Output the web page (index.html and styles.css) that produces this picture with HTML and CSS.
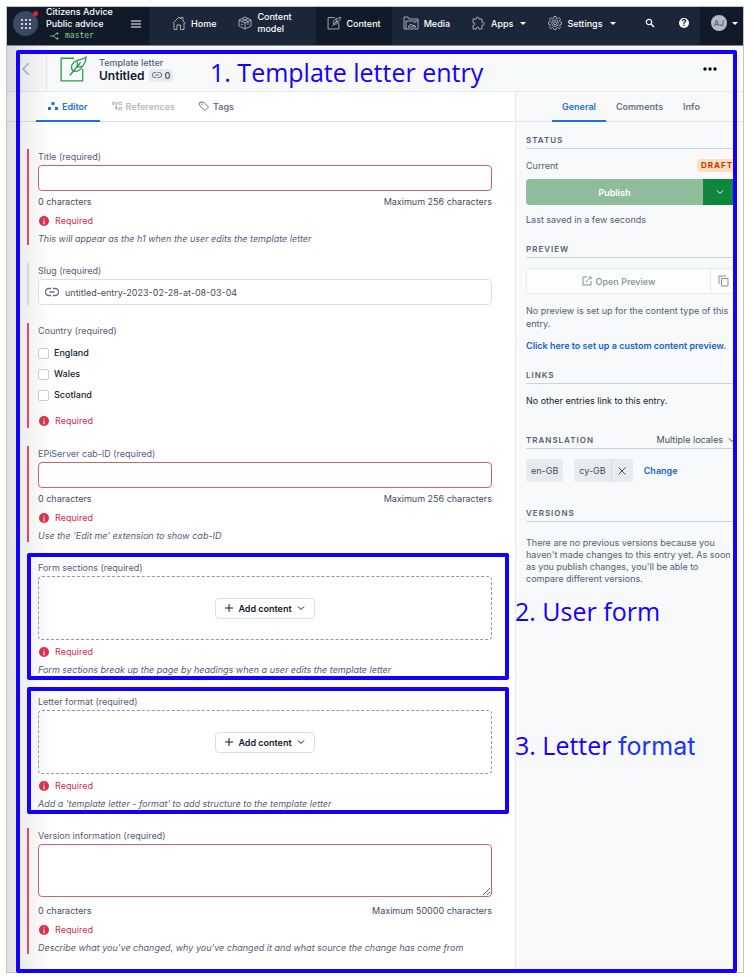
FILE: index.html
```
<!DOCTYPE html>
<html lang="en">
<head>
  <meta charset="UTF-8" />
  <meta name="viewport" content="width=device-width, initial-scale=1.0">
  <title>Template letter - Untitled</title>
  <link rel="stylesheet" href="styles.css">
</head>
<body>
  <!-- icons -->
  <svg class="sprite" aria-hidden="true">
    <symbol id="feather" viewBox="0 0 26 26">
      <path d="M14 3H2v21h20V13M10 19 20 7M13 15c-3-4-1-8 4-10 3-1 6-1 8-3 0 4-1 6-3 8-2 4-5 6-9 5zM16 11.500l5-1M17 10.500V6" />
    </symbol>
    <symbol id="link" viewBox="0 0 16 16">
      <path d="M7 4H4.500a4 4 0 0 0 0 8H7M9 4h2.500a4 4 0 0 1 0 8H9M5 8h6" />
    </symbol>
    <symbol id="chevron" viewBox="0 0 10 10">
      <path d="M2 3.500 5 6.500 8 3.500" />
    </symbol>
    <symbol id="alert" viewBox="0 0 10 10">
      <circle cx="5" cy="5" r="5" fill="#d9304c" />
      <path d="M5 2.200v1.200M4.200 4.700H5v3M4 7.700h2" stroke="#fbd8dd" fill="none" />
    </symbol>
  </svg>

  <div class="app">
    <header class="topbar">
      <div class="org">
        <button class="launcher" aria-label="Apps">
          <svg viewBox="0 0 12 12" width="12" height="12"><path d="M1 2h2M5 2h2M9 2h2M1 6h2M5 6h2M9 6h2M1 10h2M5 10h2M9 10h2" stroke="#fff" stroke-width="1.600" /></svg>
          <span class="dot"></span>
        </button>
        <div class="org-names">
          <div>Citizens Advice</div>
          <div>Public advice</div>
          <div class="branch">
            <svg viewBox="0 0 12 10" width="10" height="10"><path d="M1 5h4c2 0 2-3 4-3M5 5c2 0 2 3 4 3" fill="none" stroke="#8fd18f" /><circle cx="10" cy="2" r="1.300" fill="#8fd18f" /><circle cx="10" cy="8" r="1.300" fill="#8fd18f" /></svg>
            master
          </div>
        </div>
        <button class="burger" aria-label="Menu"><svg viewBox="0 0 10 8" width="10" height="8"><path d="M0 1h10M0 4h10M0 7h10" stroke="#fff" /></svg></button>
      </div>
      <nav class="nav">
        <a href="#">
          <svg viewBox="0 0 14 14"><path d="M1 7 7 1l2 2V1.500h2V5l2.500 2.500M2 7v6.500h3V9h3.500v4.500H12V7" /></svg>
          Home
        </a>
        <a href="#">
          <svg viewBox="0 0 14 14"><path d="M7 1 1 4v6l6 3 6-3V4zM1 4l6 3 6-3M7 7v6M4 2.500l6 3V9M10 2.500 4 5.500M3 8l2 1" /></svg>
          <span class="two-lines">Content model</span>
        </a>
        <a href="#" class="active">
          <svg viewBox="0 0 26 26" class="wide-stroke"><use href="#feather" /></svg>
          Content
        </a>
        <a href="#">
          <svg viewBox="0 0 16 14" class="media-icon"><path d="M1 13V1h4l1 2h9v10zM3 13V5h12M5 11l3-3 2 2 1-1 2 2zM11 6.500h1.500" /></svg>
          Media
        </a>
        <a href="#">
          <svg viewBox="0 0 14 14"><path d="M1 3h3.500c-1-2.500 3-2.500 2.500 0h3v3.500c3-1 3 3.500 0 2.500V13H7c.5-2.500-3.500-2.500-2.500 0H1V9.500c2.500.5 2.500-3.500 0-2.500z" /></svg>
          Apps
          <span class="caret"></span>
        </a>
        <a href="#">
          <svg viewBox="0 0 14 14"><path d="M6 .5h2l.4 1.800 1.200.5 1.600-1 1.300 1.300-1 1.600.5 1.200 1.500.3v2l-1.500.4-.5 1.200 1 1.500-1.300 1.300-1.600-1-1.200.5L8 13.500H6l-.4-1.400-1.200-.5-1.600 1-1.300-1.300 1-1.500L2 8.600.5 8.200v-2L2 5.900l.5-1.200-1-1.600 1.300-1.300 1.600 1 1.200-.5z" /><circle cx="7" cy="7.200" r="3.300" /><circle cx="7" cy="7.200" r="1.500" /></svg>
          Settings
          <span class="caret"></span>
        </a>
      </nav>
      <div class="tools">
        <button aria-label="Search"><svg viewBox="0 0 10 10" width="10" height="10"><circle cx="4" cy="4" r="2.700" fill="none" stroke="#fff" stroke-width="1.200" /><path d="m6 6 3 3" stroke="#fff" stroke-width="1.400" /></svg></button>
        <button class="help" aria-label="Help">?</button>
      </div>
      <button class="account" aria-label="Account"><span class="avatar">AJ</span><span class="caret"></span></button>
    </header>

    <div class="entry-header">
      <a href="#" class="back" aria-label="Back"><svg viewBox="0 0 8 12" width="8" height="12"><path d="M7 0 1 6l6 6" fill="none" stroke="#a3b4c0" stroke-width="1.400" /></svg></a>
      <svg class="entry-icon"><use href="#feather" /></svg>
      <div class="entry-names">
        <div class="content-type">Template letter</div>
        <div class="entry-title">
          <h1>Untitled</h1>
          <span class="link-count"><svg class="line-icon"><use href="#link" /></svg>0</span>
        </div>
      </div>
      <button class="more" aria-label="More actions"><svg viewBox="0 0 14 4" width="14" height="4"><circle cx="2" cy="2" r="1.700" /><circle cx="7" cy="2" r="1.700" /><circle cx="12" cy="2" r="1.700" /></svg></button>
    </div>

    <div class="columns">
      <main class="editor">
        <div class="tabs editor-tabs">
          <button class="tab selected"><svg viewBox="0 0 10 10"><path d="M3.500 1h3v3h-3zM0 6h3v3H0zM7 6h3v3H7z" fill="currentColor" /></svg>Editor</button>
          <button class="tab disabled"><svg viewBox="0 0 10 10"><path d="M.5 1h2v2.500h-2zM7 1h2.500v2.500H7zM7 6.500h2.500V9H7zM2.500 2H7M4.500 2v6H7M3.500 5v3" fill="none" stroke="currentColor" /></svg>References</button>
          <button class="tab tags"><svg viewBox="0 0 10 10"><path d="M.7 1.200h4L9.500 6 6 9.500.7 4.700z" fill="none" stroke="currentColor" /><circle cx="3" cy="3.200" r=".7" fill="currentColor" /></svg>Tags</button>
        </div>

        <form class="fields">
          <div class="field invalid">
            <label for="title">Title (required)</label>
            <input type="text" id="title">
            <div class="counter"><span>0 characters</span><span>Maximum 256 characters</span></div>
            <div class="error"><svg><use href="#alert" /></svg>Required</div>
            <p class="hint">This will appear as the h1 when the user edits the template letter</p>
          </div>

          <div class="field">
            <label for="slug">Slug (required)</label>
            <div class="slug-box">
              <svg class="line-icon"><use href="#link" /></svg>
              <input type="text" id="slug" value="untitled-entry-2023-02-28-at-08-03-04">
            </div>
          </div>

          <div class="field invalid">
            <div class="label">Country (required)</div>
            <div class="options">
              <label><input type="checkbox">England</label>
              <label><input type="checkbox">Wales</label>
              <label><input type="checkbox">Scotland</label>
            </div>
            <div class="error"><svg><use href="#alert" /></svg>Required</div>
          </div>

          <div class="field invalid">
            <label for="cab">EPiServer cab-ID (required)</label>
            <input type="text" id="cab">
            <div class="counter"><span>0 characters</span><span>Maximum 256 characters</span></div>
            <div class="error"><svg><use href="#alert" /></svg>Required</div>
            <p class="hint">Use the 'Edit me' extension to show cab-ID</p>
          </div>

          <div class="field invalid marked">
            <div class="label">Form sections (required)</div>
            <div class="dropzone">
              <button type="button" class="add"><svg viewBox="0 0 10 10"><path d="M5 1v8M1 5h8" /></svg>Add content<svg><use href="#chevron" /></svg></button>
            </div>
            <div class="error"><svg><use href="#alert" /></svg>Required</div>
            <p class="hint">Form sections break up the page by headings when a user edits the template letter</p>
            <div class="note">2. User form</div>
          </div>

          <div class="field invalid marked">
            <div class="label">Letter format (required)</div>
            <div class="dropzone">
              <button type="button" class="add"><svg viewBox="0 0 10 10"><path d="M5 1v8M1 5h8" /></svg>Add content<svg><use href="#chevron" /></svg></button>
            </div>
            <div class="error"><svg><use href="#alert" /></svg>Required</div>
            <p class="hint">Add a 'template letter - format' to add structure to the template letter</p>
            <div class="note">3. Letter <span class="alt">format</span></div>
          </div>

          <div class="field invalid">
            <label for="version">Version information (required)</label>
            <textarea id="version"></textarea>
            <div class="counter"><span>0 characters</span><span>Maximum 50000 characters</span></div>
            <div class="error"><svg><use href="#alert" /></svg>Required</div>
            <p class="hint">Describe what you've changed, why you've changed it and what source the change has come from</p>
          </div>
        </form>
      </main>

      <aside class="sidebar">
        <div class="tabs side-tabs">
          <button class="tab selected">General</button>
          <button class="tab">Comments</button>
          <button class="tab">Info</button>
        </div>
        <div class="panels">
          <section>
            <h2>Status</h2>
            <div class="status-row"><span>Current</span><span class="draft">Draft</span></div>
            <div class="publish">
              <button class="publish-main">Publish</button>
              <button class="publish-more" aria-label="More publish actions"><svg><use href="#chevron" /></svg></button>
            </div>
            <p>Last saved in a few seconds</p>
          </section>
          <section>
            <h2>Preview</h2>
            <div class="preview">
              <button class="preview-open"><svg viewBox="0 0 10 10"><path d="M5 1H1v8h8V5M6.500 1H9v2.500M9 1 4 6" /></svg>Open Preview</button>
              <button class="preview-copy" aria-label="Copy"><svg viewBox="0 0 12 12"><path d="M1 9V1h7M3.500 3.500H10V11H3.500z" /></svg></button>
            </div>
            <p>No preview is set up for the content type of this entry.</p>
            <a href="#">Click here to set up a custom content preview.</a>
          </section>
          <section class="links">
            <h2>Links</h2>
            <p class="dark">No other entries link to this entry.</p>
          </section>
          <section class="translation">
            <h2>Translation <button class="locales">Multiple locales<svg><use href="#chevron" /></svg></button></h2>
            <div class="locale-row">
              <span class="chip">en-GB</span>
              <span class="chip">cy-GB<button aria-label="Remove cy-GB"><svg viewBox="0 0 10 10"><path d="m1.500 1.500 7 7M8.500 1.500l-7 7" /></svg></button></span>
              <a href="#">Change</a>
            </div>
          </section>
          <section class="versions">
            <h2>Versions</h2>
            <p>There are no previous versions because you haven't made changes to this entry yet. As soon as you publish changes, you'll be able to compare different versions.</p>
          </section>
        </div>
      </aside>
    </div>

    <div class="outline"></div>
    <div class="note main-note">1. Template letter entry</div>
  </div>
</body>
</html>
```
FILE: styles.css
```
* {
  box-sizing: border-box;
}

body {
  margin: 6px 10px 4px 6px;
  background: #fff;
  font-family: Inter, "Liberation Sans", sans-serif;
  font-size: 9px;
  line-height: 13px;
  color: #536075;
}

button, input, textarea {
  font: inherit;
  color: inherit;
  margin: 0;
  padding: 0;
  border: none;
  background: none;
}

button {
  cursor: pointer;
}

h1, h2, p {
  margin: 0;
}

a {
  color: #1760cf;
  font-weight: 600;
  text-decoration: none;
}

svg {
  flex-shrink: 0;
}

.sprite {
  position: absolute;
  width: 0;
  height: 0;
}

.app {
  position: relative;
  border: 1px solid #c4c4c4;
  box-shadow: 0 0 0 1px #e2e2e2;
}

/* grey shade along the left edge */
.app::before {
  content: "";
  position: absolute;
  top: 39px;
  bottom: 0;
  left: 0;
  width: 44px;
  background: linear-gradient(to right, rgba(0, 0, 0, 0.13), rgba(0, 0, 0, 0.08) 25%, rgba(0, 0, 0, 0));
  pointer-events: none;
}

/* top bar */
.topbar {
  display: flex;
  height: 39px;
  background: #1b2738;
  border-bottom: 1px solid #7c848e;
  color: #fff;
  font-weight: 500;
}

.org {
  display: flex;
  align-items: center;
  width: 142px;
  padding: 0 8px 5px 6px;
  background: #111a29;
}

.launcher {
  position: relative;
  display: flex;
  align-items: center;
  justify-content: center;
  width: 25px;
  height: 25px;
  border-radius: 50%;
  background: #3a4a62;
}

.dot {
  position: absolute;
  top: 0;
  right: 0;
  width: 5px;
  height: 5px;
  border-radius: 50%;
  background: #e0202c;
}

.org-names {
  margin-left: 8px;
  line-height: 12px;
  white-space: nowrap;
}

.branch {
  display: flex;
  align-items: center;
  gap: 6px;
  padding-left: 3px;
  font-family: "DejaVu Sans Mono", monospace;
  font-size: 8px;
  font-weight: 400;
  color: #8fd18f;
}

.burger {
  display: flex;
  margin-left: auto;
}

.nav {
  display: flex;
  padding-left: 12px;
}

.nav a {
  display: flex;
  align-items: center;
  gap: 5px;
  padding: 0 11px 6px;
  color: #fff;
  font-weight: 500;
}

.nav .active {
  background: #111a29;
}

.nav svg {
  width: 14px;
  height: 14px;
  fill: none;
  stroke: #c3cbd5;
  stroke-width: 0.8;
}

.nav .wide-stroke {
  stroke-width: 1.5;
}

.nav .media-icon {
  width: 16px;
}

.two-lines {
  width: 48px;
  line-height: 12px;
}

.caret {
  border: 3px solid transparent;
  border-top-color: #fff;
  border-bottom: none;
}

.nav .caret {
  margin-left: 2px;
}

.tools {
  display: flex;
  align-items: center;
  gap: 24px;
  margin-left: auto;
  padding: 0 11px 6px;
}

.tools svg {
  display: block;
}

.help {
  width: 10px;
  height: 10px;
  border-radius: 50%;
  background: #fff;
  color: #111a29;
  font-weight: 700;
  line-height: 10px;
}

.account {
  display: flex;
  align-items: center;
  gap: 5px;
  width: 43px;
  padding: 0 0 6px 11px;
  background: #111a29;
}

.avatar {
  width: 16px;
  height: 16px;
  border-radius: 50%;
  background: #b3bac3;
  color: #56606e;
  font-size: 8px;
  line-height: 16px;
}

/* entry header */
.entry-header {
  display: flex;
  align-items: center;
  height: 46px;
  background: #f7f9fa;
  border-bottom: 1px solid #e5ebed;
}

.back {
  display: flex;
  align-items: center;
  align-self: stretch;
  width: 40px;
  padding-left: 15px;
  border-right: 1px solid #e5ebed;
}

.entry-icon {
  width: 28px;
  height: 28px;
  margin-left: 12px;
  fill: none;
  stroke: #2d9a4f;
  stroke-width: 1.2;
}

.entry-names {
  margin-left: 12px;
}

.content-type {
  font-weight: 500;
}

.entry-title {
  display: flex;
  align-items: center;
  gap: 4px;
}

.entry-title h1 {
  font-size: 12px;
  line-height: 13px;
  font-weight: 600;
  color: #111b2b;
}

.line-icon {
  width: 10px;
  height: 10px;
  fill: none;
  stroke: #67728a;
  stroke-width: 1.6;
}

.link-count {
  display: flex;
  align-items: center;
  gap: 3px;
  padding: 0 3px;
  border-radius: 3px;
  background: #e7ebee;
  font-weight: 600;
}

.more {
  display: flex;
  margin-left: auto;
  margin-right: 26px;
  color: #111b2b;
}

/* columns */
.columns {
  display: flex;
}

.editor {
  flex: 1;
  min-width: 0;
}

.sidebar {
  width: 228px;
  background: #f7f9fa;
  border-left: 1px solid #e5ebed;
}

.tabs {
  display: flex;
  height: 30px;
  border-bottom: 1px solid #dfe6ea;
}

.editor-tabs {
  padding-left: 29px;
}

.side-tabs {
  padding-left: 36px;
}

.tab {
  display: flex;
  align-items: center;
  gap: 4px;
  height: 30px;
  padding: 0 10px;
  border-bottom: 2px solid transparent;
  font-weight: 600;
  color: #67728a;
}

.editor-tabs .tab {
  padding: 0 12px;
}

.tab svg {
  width: 10px;
  height: 10px;
}

.tab.selected {
  color: #1f6fe0;
  border-bottom-color: #1f6fe0;
}

.tab.disabled {
  color: #b3bac6;
}

/* fields */
.fields {
  display: flex;
  flex-direction: column;
  gap: 18px;
  padding: 27px 23px 18px 20px;
}

.field {
  position: relative;
  padding-left: 9px;
  border-left: 2px solid #cfd9e0;
}

.field.invalid {
  border-left-color: #e0485f;
}

.field > label, .label {
  display: block;
  line-height: 16px;
}

.field > input, .slug-box, textarea {
  display: block;
  width: 100%;
  height: 26px;
  padding: 0 6px;
  border: 1px solid #d3606f;
  border-radius: 4px;
  background: #fff;
}

.slug-box {
  display: flex;
  align-items: center;
  gap: 6px;
  border-color: #d8e0e5;
}

.slug-box input {
  flex: 1;
  color: #414d63;
}

.slug-box .line-icon {
  width: 14px;
  height: 14px;
}

.field textarea {
  height: 53px;
  margin-bottom: 7px;
  resize: vertical;
}

.counter {
  display: flex;
  justify-content: space-between;
  margin-top: 4px;
  line-height: 14px;
  color: #414d63;
}

.error {
  display: flex;
  align-items: center;
  gap: 6px;
  margin-top: 5px;
  line-height: 14px;
  color: #da294a;
}

.error svg {
  width: 10px;
  height: 10px;
  margin-left: 1px;
}

.hint {
  margin-top: 4px;
  line-height: 13px;
  font-style: italic;
}

.options {
  display: flex;
  flex-direction: column;
  gap: 1px;
  margin: 4px 0 9px;
}

.options label {
  display: flex;
  align-items: center;
  gap: 5px;
  line-height: 20px;
  font-weight: 500;
  color: #111b2b;
}

.options input {
  appearance: none;
  width: 11px;
  height: 11px;
  border: 1px solid #c3cfd8;
  border-radius: 2px;
  background: #fff;
}

.dropzone {
  display: flex;
  align-items: center;
  justify-content: center;
  height: 64px;
  border: 1px dashed #8f99a8;
  border-radius: 4px;
}

.add {
  display: flex;
  align-items: center;
  gap: 4px;
  height: 21px;
  padding: 0 8px;
  border: 1px solid #d8e0e5;
  border-radius: 4px;
  background: #fff;
  font-weight: 600;
  color: #111b2b;
}

.add svg, .publish svg, .preview svg, .locales svg, .chip svg {
  width: 10px;
  height: 10px;
  fill: none;
  stroke: currentColor;
}

/* blue annotations */
.outline {
  position: absolute;
  top: 43px;
  right: 6px;
  bottom: -1px;
  left: 9px;
  border: 4px solid #1400ff;
  border-radius: 2px;
  pointer-events: none;
}

.marked::after {
  content: "";
  position: absolute;
  top: -7px;
  right: -17px;
  bottom: -4px;
  left: -2px;
  border: 4px solid #1400ff;
  border-radius: 2px;
  pointer-events: none;
}

.note {
  position: absolute;
  left: calc(100% + 23px);
  top: 33px;
  font-family: "Open Sans", "Noto Sans", sans-serif;
  font-size: 25px;
  line-height: 36px;
  color: #1400ff;
  white-space: nowrap;
}

.main-note {
  top: 47px;
  left: 203px;
}

.alt {
  font-family: Inter, sans-serif;
  color: #1a35ff;
}

/* sidebar */
.panels {
  display: flex;
  flex-direction: column;
  gap: 16px;
  padding: 11px 6px 0 10px;
}

h2 {
  display: flex;
  justify-content: space-between;
  margin-bottom: 10px;
  padding-bottom: 1px;
  border-bottom: 1px solid #c8d5dd;
  font-size: 8px;
  line-height: 14px;
  font-weight: 600;
  letter-spacing: 1px;
  text-transform: uppercase;
}

.status-row {
  display: flex;
  align-items: center;
  justify-content: space-between;
  margin-bottom: 7px;
}

.draft {
  padding: 0 4px;
  border-radius: 3px;
  background: #ffe0b8;
  color: #b8391a;
  font-size: 8px;
  font-weight: 700;
  letter-spacing: 1px;
  text-transform: uppercase;
}

.publish, .preview {
  display: flex;
  height: 26px;
}

.publish {
  margin-bottom: 8px;
  color: #fff;
  font-weight: 600;
}

.publish-main {
  flex: 1;
  border-radius: 4px 0 0 4px;
  background: #8fbd9b;
}

.publish-more {
  display: flex;
  align-items: center;
  justify-content: center;
  width: 34px;
  border-radius: 0 4px 4px 0;
  background: #10853c;
}

.preview {
  margin-bottom: 10px;
  border: 1px solid #e7ebee;
  border-radius: 4px;
  background: #fcfdfd;
  color: #878f9b;
  font-weight: 500;
}

.preview button {
  display: flex;
  align-items: center;
  justify-content: center;
  gap: 4px;
}

.preview-open {
  flex: 1;
}

.preview-copy {
  width: 26px;
  border-left: 1px solid #e7ebee;
}

.preview-copy svg {
  width: 12px;
  height: 12px;
}

.preview + p {
  margin-bottom: 9px;
}

.links {
  padding-bottom: 10px;
}

.dark {
  color: #111b2b;
}

.locales {
  display: flex;
  align-items: center;
  gap: 4px;
  font-size: 9px;
  font-weight: 400;
  color: #414d63;
}

.locale-row {
  display: flex;
  align-items: center;
  gap: 11px;
}

.translation {
  padding-bottom: 8px;
}

.chip {
  display: flex;
  align-items: center;
  height: 23px;
  padding: 0 5px;
  border-radius: 3px;
  background: #e7ebee;
  color: #414d63;
}

.chip button {
  display: flex;
  align-items: center;
  justify-content: center;
  width: 22px;
  height: 23px;
  margin-left: 5px;
  margin-right: -5px;
  border-left: 1px solid #d3dbe0;
}

.versions h2 {
  margin-bottom: 15px;
}

.versions p {
  line-height: 12px;
}
```
